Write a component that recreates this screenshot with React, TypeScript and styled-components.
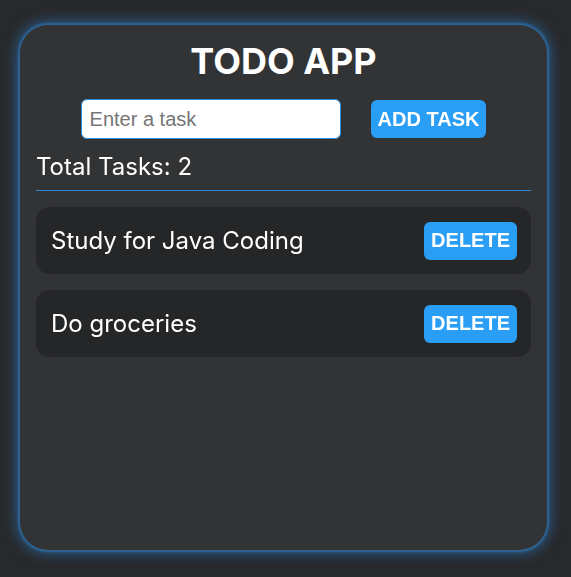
import React, { useState } from "react";
import styled, { createGlobalStyle } from "styled-components";

const GlobalStyle = createGlobalStyle`
  html, body {
    margin: 0;
    padding: 0;
    background: #28292b;
  }
  body {
    font-family: Inter, "Noto Sans", sans-serif;
  }
`;

const Page = styled.div`
  padding: 25px 24px 27px 20px;
`;

const Card = styled.div`
  width: 527px;
  height: 525px;
  box-sizing: border-box;
  background: #323335;
  border-radius: 28px;
  box-shadow: 0 0 2px 2px #2d6699, 0 0 14px 3px rgba(42, 130, 210, 0.6);
  padding: 12px 16px;
  color: #fff;
`;

const Title = styled.h1`
  margin: 0;
  text-align: center;
  font-size: 36px;
  font-weight: 700;
  line-height: 48px;
`;

const InputRow = styled.div`
  display: flex;
  justify-content: center;
  align-items: center;
  gap: 30px;
  margin-top: 14px;
`;

const TaskInput = styled.input`
  width: 260px;
  height: 40px;
  box-sizing: border-box;
  border: 1px solid #2a8fe0;
  border-radius: 6px;
  padding: 0 8px;
  font-family: "Liberation Sans", Arial, sans-serif;
  font-size: 20px;
  color: #222;
  outline: none;

  &::placeholder {
    color: #757575;
  }
`;

const Button = styled.button<{ $height?: number }>`
  height: ${(p) => p.$height ?? 38}px;
  border: none;
  border-radius: 6px;
  background: #2a9df4;
  color: #fff;
  font-family: "Liberation Sans", Arial, sans-serif;
  font-weight: 700;
  font-size: 20px;
  padding: 0 7px;
  cursor: pointer;
`;

const Count = styled.div`
  margin-top: 13px;
  font-size: 24px;
  line-height: 30px;
  padding-bottom: 8px;
  border-bottom: 1px solid #2f88d6;
`;

const List = styled.ul`
  list-style: none;
  margin: 16px 0 0;
  padding: 0;
  display: flex;
  flex-direction: column;
  gap: 16px;
`;

const Item = styled.li`
  display: flex;
  align-items: center;
  justify-content: space-between;
  height: 67px;
  box-sizing: border-box;
  padding: 0 14px 0 15px;
  background: #252628;
  border-radius: 14px;
  font-size: 24px;
`;

export default function App() {
  const [tasks] = useState(["Study for Java Coding", "Do groceries"]);
  return (
    <>
      <GlobalStyle />
      <Page>
        <Card>
          <Title>TODO APP</Title>
          <InputRow>
            <TaskInput placeholder="Enter a task" autoFocus />
            <Button>ADD TASK</Button>
          </InputRow>
          <Count>Total Tasks: {tasks.length}</Count>
          <List>
            {tasks.map((t) => (
              <Item key={t}>
                <span>{t}</span>
                <Button>DELETE</Button>
              </Item>
            ))}
          </List>
        </Card>
      </Page>
    </>
  );
}
